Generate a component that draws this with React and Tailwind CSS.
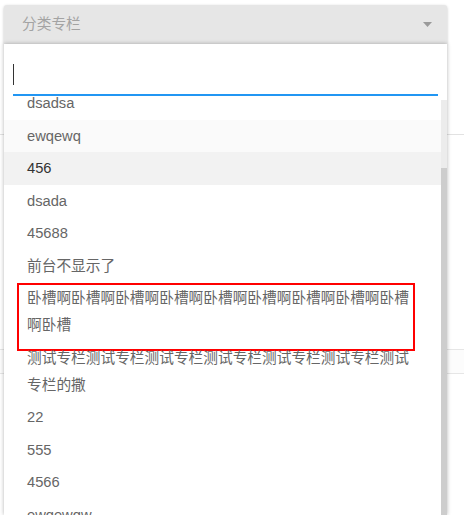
export default function App() {
  const items = [
    { t: "dsadsa" },
    { t: "ewqewq", bg: "bg-[#fafafa]" },
    { t: "456", bg: "bg-[#f2f2f2]", dark: true },
    { t: "dsada" },
    { t: "45688" },
    { t: "前台不显示了" },
    { t: "卧槽啊卧槽啊卧槽啊卧槽啊卧槽啊卧槽啊卧槽啊卧槽啊卧槽啊卧槽", box: true },
    { t: "测试专栏测试专栏测试专栏测试专栏测试专栏测试专栏测试专栏的撒" },
    { t: "22" },
    { t: "555" },
    { t: "4566" },
    { t: "ewqewqw" },
  ];
  return (
    <div
      className="relative w-[464px] h-[515px] overflow-hidden bg-white"
      style={{ fontFamily: '"Liberation Sans", "Noto Sans CJK SC", sans-serif' }}
    >
      {/* background page */}
      <div className="pt-[5px] pl-[4px]">
        <div className="w-[443px] h-[39px] bg-[#e6e6e6] rounded-t-[3px] shadow-[0_1px_3px_rgba(0,0,0,0.25)] flex items-center justify-between pl-[18px] pr-[15px]">
          <span className="text-[14.7px] text-[#a3a3a3]">分类专栏</span>
          <svg width="9" height="5" viewBox="0 0 9 5">
            <path d="M0 0 L9 0 L4.5 5 Z" fill="#9a9a9a" />
          </svg>
        </div>
      </div>
      <div className="mt-[90px] border-t border-[#e2e2e2]" />
      <div className="mt-[214px] h-[25px] border-t border-b border-[#e6e6e6] bg-[#fcfcfc]" />

      {/* dropdown panel */}
      <div className="absolute left-[4px] top-[44px] bottom-0 w-[443px] bg-white shadow-[0_0_4px_rgba(0,0,0,0.3)] flex flex-col">
        <div className="h-[52px] px-[9px] shrink-0">
          <div className="h-full border-b-2 border-[#2196f3] relative">
            <div className="absolute left-0 top-[20px] w-px h-[21px] bg-[#333]" />
          </div>
        </div>
        <div className="flex-1 flex overflow-hidden">
          <div className="flex-1 overflow-hidden">
            <div className="-mt-[8.75px]">
              {items.map((it, i) => (
                <div
                  key={i}
                  className={`relative pl-[23px] pr-[20px] py-[2.75px] text-[14.7px] leading-[27px] ${it.bg || ""} ${it.dark ? "text-[#333]" : "text-[#666]"}`}
                >
                  {it.t}
                  {it.box && (
                    <div className="absolute left-[13px] top-[1px] w-[398px] h-[68px] border-2 border-[#ff0000] pointer-events-none" />
                  )}
                </div>
              ))}
            </div>
          </div>
          <div className="w-[6px] mt-[4px] flex flex-col">
            <div className="h-[68px] bg-[#ececec]" />
            <div className="flex-1 bg-[#cdcdcd]" />
          </div>
        </div>
      </div>
    </div>
  );
}
